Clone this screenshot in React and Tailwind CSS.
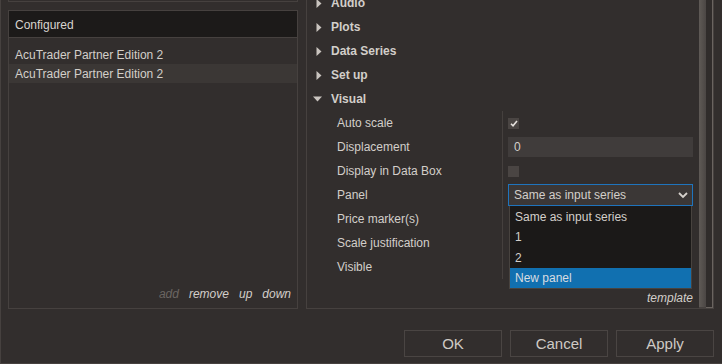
import React from 'react';

const SECTIONS = ['Audio', 'Plots', 'Data Series', 'Set up'];

const PanelItem = ({ label, children }) => (
    <div className="flex h-[24px]">
        <div className="w-[196px] shrink-0 border-r border-[#45403e] pl-[30px] flex items-center">{label}</div>
        <div className="relative flex-1 pl-[5px] pr-[6px] flex items-center">{children}</div>
    </div>
);

const Arrow = ({ open }) => (
    open ? (
        <svg width="9" height="6" viewBox="0 0 9 6" className="mr-[9px] ml-[-3px]">
            <path d="M0 0.5h9L4.5 5.5z" fill="#c9c4bf" />
        </svg>
    ) : (
        <svg width="6" height="9" viewBox="0 0 6 9" className="mr-[9px]">
            <path d="M0.5 0v9L5.5 4.5z" fill="#c9c4bf" />
        </svg>
    )
);

const Check = ({ checked }) => (
    <div className="w-[11px] h-[11px] bg-[#4a4543] flex items-center justify-center">
        {checked && (
            <svg width="8" height="7" viewBox="0 0 8 7">
                <path d="M1 3.8l2 2L7 1" stroke="#e6e2de" strokeWidth="1.6" fill="none" />
            </svg>
        )}
    </div>
);

export default function App() {
    return (
        <div
            className="w-[722px] h-[364px] bg-[#322e2d] border-l border-b border-[#46413f] text-[12px] text-[#d3cfca] overflow-hidden flex flex-col"
            style={{ fontFamily: '"Liberation Sans", Arial, sans-serif' }}
        >
            <div className="flex h-[309px]">
                {/* left list */}
                <div className="w-[290px] ml-[7px] shrink-0 flex flex-col">
                    <div className="h-[2px] border-b border-x border-[#46413f]"></div>
                    <div className="mt-[8px] flex-1 border border-[#46413f] flex flex-col">
                        <div className="h-[27px] bg-[#1c1a19] border-b border-[#46413f] flex items-center pl-[6px] pt-[2px] text-[#d8d4cf]">Configured</div>
                        <div className="mt-[7px]">
                            <div className="h-[19px] flex items-center pl-[6px] pt-[1px]">AcuTrader Partner Edition 2</div>
                            <div className="h-[19px] flex items-center pl-[6px] pt-[1px] bg-[#3b3735]">AcuTrader Partner Edition 2</div>
                        </div>
                        <div className="flex-1"></div>
                        <div className="flex justify-end gap-[10px] pr-[6px] pb-[5px] italic">
                            <span className="text-[#6a6562]">add</span>
                            <span>remove</span>
                            <span>up</span>
                            <span>down</span>
                        </div>
                    </div>
                </div>

                {/* right property grid */}
                <div className="ml-[8px] w-[408px] shrink-0 border-l border-r border-b border-[#46413f] flex overflow-hidden">
                    <div className="flex-1 flex flex-col">
                        <div className="mt-[-9px]">
                            {SECTIONS.map(s => (
                                <div key={s} className="h-[24px] flex items-center pl-[9px] font-bold">
                                    <Arrow />
                                    {s}
                                </div>
                            ))}
                            <div className="h-[24px] flex items-center pl-[9px] font-bold">
                                <Arrow open />
                                Visual
                            </div>
                        </div>
                        <PanelItem label="Auto scale"><Check checked /></PanelItem>
                        <PanelItem label="Displacement">
                            <div className="w-full h-[20px] bg-[#403c3b] flex items-center pl-[6px]">0</div>
                        </PanelItem>
                        <PanelItem label="Display in Data Box"><Check /></PanelItem>
                        <PanelItem label="Panel">
                            <div className="w-full h-[22px] bg-[#3b3736] border border-[#1f74bd] flex items-center pl-[5px] pr-[4px] justify-between">
                                <span>Same as input series</span>
                                <svg width="10" height="7" viewBox="0 0 10 7">
                                    <path d="M1 1l4 4 4-4" stroke="#d6d1cc" strokeWidth="1.8" fill="none" />
                                </svg>
                            </div>
                            <div className="absolute z-10 left-[6px] right-[7px] top-[23px] bg-[#1b1918] border-x border-b border-[#48433f]">
                                <div className="h-[21px] flex items-center pl-[5px]">Same as input series</div>
                                <div className="h-[20px] flex items-center pl-[5px]">1</div>
                                <div className="h-[21px] flex items-center pl-[5px]">2</div>
                                <div className="h-[20px] flex items-center pl-[5px] bg-[#1170b0] text-[#d8dde2]">New panel</div>
                            </div>
                        </PanelItem>
                        <PanelItem label="Price marker(s)" />
                        <PanelItem label="Scale justification" />
                        <PanelItem label="Visible" />
                        <div className="flex justify-end pr-[6px] pt-[10px] italic">template</div>
                    </div>
                    {/* scrollbar */}
                    <div className="w-[14px] shrink-0 flex">
                        <div className="w-[7px] bg-gradient-to-r from-[#5f5a56] to-[#4b4644] border-b border-[#46413f]"></div>
                        <div className="w-[7px] bg-[#302c2b] border-b border-r border-[#6a6460]"></div>
                    </div>
                </div>
            </div>

            {/* buttons */}
            <div className="flex justify-end gap-[8px] pr-[8px] mt-[21px]">
                {['OK', 'Cancel', 'Apply'].map(b => (
                    <div key={b} className="w-[98px] h-[27px] border border-[#4a4543] flex items-center justify-center pt-[1px] text-[15px] text-[#cfcac5]">
                        {b}
                    </div>
                ))}
            </div>
        </div>
    );
}
